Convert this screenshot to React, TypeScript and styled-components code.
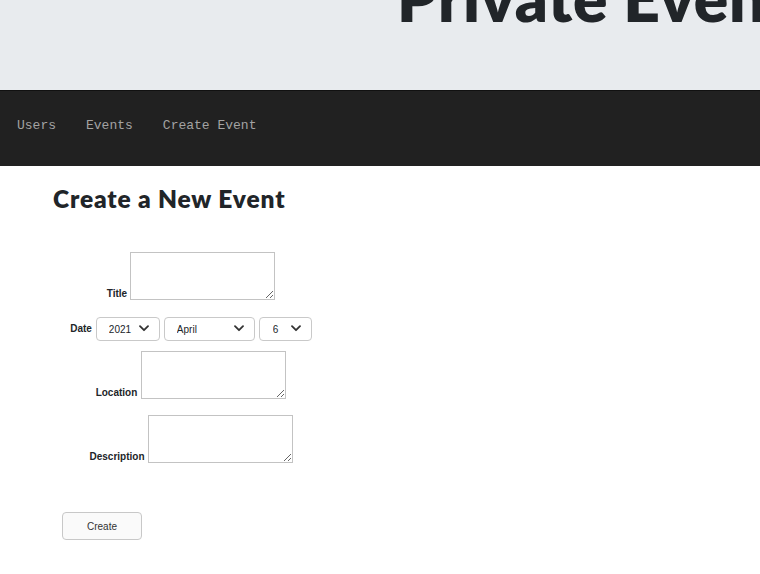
import React from "react";
import styled, { createGlobalStyle } from "styled-components";

const Global = createGlobalStyle`
  html, body { margin: 0; padding: 0; background: #ffffff; }
  body { font-family: "Liberation Sans", Arial, sans-serif; }
`;

const Header = styled.header`
  height: 90px;
  background: #e8ebee;
  overflow: hidden;
  display: flex;
  justify-content: flex-start;
  align-items: flex-start;
`;

const SiteTitle = styled.h1`
  margin: -34px 0 0 397px;
  white-space: nowrap;
  font-family: Lato, "Noto Sans", sans-serif;
  font-weight: 800;
  font-size: 64px;
  line-height: 1;
  letter-spacing: 0.6px;
  color: #212529;
`;

const Nav = styled.nav`
  height: 76px;
  box-sizing: border-box;
  background: #212121;
  border-top: 1px solid #111111;
  display: flex;
  align-items: center;
  gap: 30px;
  padding: 0 0 6px 17px;
`;

const NavLink = styled.a`
  font-family: "Liberation Mono", "DejaVu Sans Mono", monospace;
  font-size: 13px;
  color: #a3a3a3;
  text-decoration: none;
  cursor: pointer;
`;

const Main = styled.main`
  padding: 0 53px;
`;

const Heading = styled.h2`
  margin: 18px 0 0;
  font-family: Lato, "Noto Sans", sans-serif;
  font-weight: 800;
  font-size: 24.5px;
  line-height: 30px;
  letter-spacing: 0.85px;
  color: #212529;
`;

const Form = styled.form`
  width: 276px;
  margin-top: 38px;
  display: flex;
  flex-direction: column;
  align-items: center;
`;

const FieldRow = styled.div<{ $gap: number; $mb: number }>`
  display: flex;
  align-items: flex-end;
  gap: ${(p) => p.$gap}px;
  margin-bottom: ${(p) => p.$mb}px;
`;

const Label = styled.label`
  font-family: "Liberation Sans", Arial, sans-serif;
  font-weight: 700;
  font-size: 10px;
  line-height: 12px;
  color: #212529;
`;

const DateLabel = styled(Label)`
  align-self: center;
`;

const TextArea = styled.textarea`
  width: 145px;
  height: 48px;
  box-sizing: border-box;
  border: 1px solid #c3c3c3;
  border-radius: 0;
  padding: 2px;
  font-family: "Liberation Sans", Arial, sans-serif;
  font-size: 10px;
  display: block;
`;

const Selects = styled.div`
  display: flex;
  gap: 4px;
`;

const SelectWrap = styled.div<{ $w: number }>`
  position: relative;
  width: ${(p) => p.$w}px;
  height: 24px;
`;

const Select = styled.select<{ $pl: number }>`
  appearance: none;
  -webkit-appearance: none;
  width: 100%;
  height: 100%;
  box-sizing: border-box;
  border: 1px solid #c9c9c9;
  border-radius: 4px;
  background: #ffffff;
  padding: 0 0 0 ${(p) => p.$pl}px;
  font-family: "Liberation Sans", Arial, sans-serif;
  font-size: 10px;
  color: #212529;
  outline: none;
`;

const Chevron = styled.svg`
  position: absolute;
  right: 11px;
  top: 8px;
  width: 10px;
  height: 7px;
  pointer-events: none;
`;

const ButtonRow = styled.div`
  align-self: flex-start;
  margin-left: 9px;
`;

const Button = styled.button`
  width: 80px;
  height: 28px;
  box-sizing: border-box;
  border: 1px solid #c8c8c8;
  border-radius: 4px;
  background: #fafafa;
  font-family: "Liberation Sans", Arial, sans-serif;
  font-size: 10px;
  color: #333333;
  cursor: pointer;
`;

const ChevronIcon = () => (
  <Chevron viewBox="0 0 10 7">
    <path d="M1 1.2 L5 5.2 L9 1.2" fill="none" stroke="#333" strokeWidth="1.8" strokeLinecap="round" strokeLinejoin="round" />
  </Chevron>
);

const years = ["2016", "2017", "2018", "2019", "2020", "2021", "2022", "2023", "2024", "2025", "2026"];
const months = ["January", "February", "March", "April", "May", "June", "July", "August", "September", "October", "November", "December"];
const days = Array.from({ length: 31 }, (_, i) => String(i + 1));

export default function App() {
  return (
    <>
      <Global />
      <Header>
        <SiteTitle>Private Events</SiteTitle>
      </Header>
      <Nav>
        <NavLink>Users</NavLink>
        <NavLink>Events</NavLink>
        <NavLink>Create Event</NavLink>
      </Nav>
      <Main>
        <Heading>Create a New Event</Heading>
        <Form onSubmit={(e) => e.preventDefault()}>
          <FieldRow $gap={3} $mb={17}>
            <Label htmlFor="title">Title</Label>
            <TextArea id="title" />
          </FieldRow>
          <FieldRow $gap={4} $mb={10}>
            <DateLabel>Date</DateLabel>
            <Selects>
              <SelectWrap $w={64}>
                <Select $pl={12} defaultValue="2021">
                  {years.map((y) => (
                    <option key={y}>{y}</option>
                  ))}
                </Select>
                <ChevronIcon />
              </SelectWrap>
              <SelectWrap $w={91}>
                <Select $pl={12} defaultValue="April">
                  {months.map((m) => (
                    <option key={m}>{m}</option>
                  ))}
                </Select>
                <ChevronIcon />
              </SelectWrap>
              <SelectWrap $w={53}>
                <Select $pl={13} defaultValue="6">
                  {days.map((d) => (
                    <option key={d}>{d}</option>
                  ))}
                </Select>
                <ChevronIcon />
              </SelectWrap>
            </Selects>
          </FieldRow>
          <FieldRow $gap={4} $mb={16}>
            <Label htmlFor="location">Location</Label>
            <TextArea id="location" />
          </FieldRow>
          <FieldRow $gap={3} $mb={49}>
            <Label htmlFor="description">Description</Label>
            <TextArea id="description" />
          </FieldRow>
          <ButtonRow>
            <Button type="submit">Create</Button>
          </ButtonRow>
        </Form>
      </Main>
    </>
  );
}
